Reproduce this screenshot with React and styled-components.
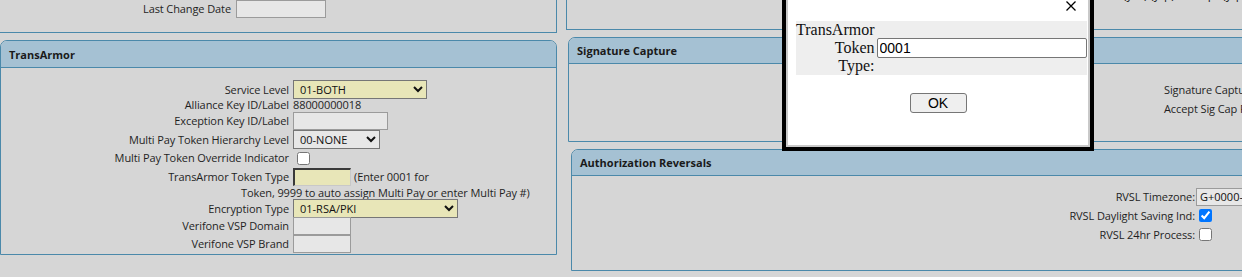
import React from 'react';
import styled, { createGlobalStyle } from 'styled-components';

const Global = createGlobalStyle`
  html, body { margin: 0; padding: 0; }
  body {
    background: #d6d6d6;
    font-family: "Open Sans", "Liberation Sans", sans-serif;
    font-size: 11px;
    letter-spacing: -0.1px;
    color: #1f1f1f;
    overflow: hidden;
  }
  * { box-sizing: border-box; }
`;

const BORDER = '#4b89aa';
const HEADER = '#a5c1d3';

const Page = styled.div`
  position: relative;
  display: flex;
  width: 1242px;
  height: 277px;
  overflow: hidden;
`;

const Column = styled.div`
  flex: none;
  width: ${(p) => p.$width}px;
  margin-left: ${(p) => p.$gap || 0}px;
  display: flex;
  flex-direction: column;
`;

const Panel = styled.section`
  border: 1px solid ${BORDER};
  border-top: ${(p) => (p.$cut ? 'none' : `1px solid ${BORDER}`)};
  border-left: ${(p) => (p.$noLeft ? 'none' : `1px solid ${BORDER}`)};
  border-radius: ${(p) => (p.$cut ? '0' : '7px 7px 0 0')};
  margin-top: ${(p) => p.$top || 0}px;
  margin-left: ${(p) => p.$shift || 0}px;
  height: ${(p) => p.$height}px;
  overflow: hidden;
  flex: none;
`;

const PanelHeader = styled.header`
  height: ${(p) => p.$h || 27}px;
  background: ${HEADER};
  border-bottom: 1px solid ${BORDER};
  display: flex;
  align-items: center;
  padding-left: 8px;
  font-weight: 700;
  font-size: 11px;
  letter-spacing: 0;
  color: #1a1a1a;
`;

const Body = styled.div`
  padding-top: ${(p) => p.$pt || 0}px;
  padding-left: ${(p) => p.$pl || 0}px;
  display: flex;
  flex-direction: column;
`;

const Row = styled.div`
  display: grid;
  grid-template-columns: ${(p) => p.$label}px auto;
  column-gap: ${(p) => (p.$gap === undefined ? 4 : p.$gap)}px;
  align-items: center;
  height: ${(p) => p.$h}px;
  white-space: nowrap;
`;

const Label = styled.label`
  text-align: right;
  line-height: 12px;
`;

const Controls = styled.div`
  display: flex;
  align-items: center;
  gap: 3px;
`;

const TextBox = styled.input`
  width: ${(p) => p.$w}px;
  height: 18px;
  margin: 0;
  padding: 0 3px;
  font-family: "Open Sans", sans-serif;
  font-size: 11px;
  background: ${(p) => (p.$yellow ? '#e8e6b8' : '#e7e7e7')};
  border: 1px solid #9b9b9b;
  ${(p) =>
    p.$yellow &&
    `border-top: 2px solid #3a3a3a; border-left: 2px solid #3a3a3a; border-right: 1px solid #c8c8c8; border-bottom: 1px solid #c8c8c8;`}
  outline: none;
  color: #111;
`;

const Select = styled.select`
  width: ${(p) => p.$w}px;
  height: 19px;
  margin: 0;
  padding: 0 0 0 2px;
  font-family: "Open Sans", sans-serif;
  font-size: 11px;
  color: #111;
  background-color: ${(p) => (p.$yellow ? '#e8e6b8' : '#e7e7e7')};
  border: 1px solid #767676;
  border-radius: 0;
`;

const Check = styled.input.attrs({ type: 'checkbox' })`
  width: 13px;
  height: 13px;
  margin: 0 0 0 4px;
  accent-color: #0075ff;
`;

const Value = styled.span`
  line-height: 12px;
`;

const Note = styled.div`
  height: ${(p) => p.$h}px;
  padding-left: ${(p) => p.$pl}px;
  display: flex;
  align-items: center;
  white-space: nowrap;
`;

const PlainRow = styled.div`
  height: ${(p) => p.$h}px;
  display: flex;
  align-items: center;
  white-space: nowrap;
`;

/* ---------- dialog ---------- */
const Dialog = styled.div`
  position: absolute;
  left: 782px;
  top: -20px;
  width: 312px;
  height: 171px;
  border: 4px solid #000;
  background: #fff;
`;

const DialogInner = styled.div`
  height: 100%;
  border: 2px solid #c9c9c9;
  border-top: none;
  display: flex;
  flex-direction: column;
`;

const TitleBar = styled.div`
  height: 37px;
  flex: none;
  position: relative;
`;

const Close = styled.button`
  position: absolute;
  right: 12px;
  top: 17px;
  width: 10px;
  height: 10px;
  padding: 0;
  border: none;
  background: none;
  display: flex;
`;

const FieldTable = styled.table`
  margin-left: 8px;
  width: 291px;
  background: #eeeeee;
  border-collapse: collapse;
  font-family: "Liberation Serif", "Times New Roman", serif;
  font-size: 16px;
  letter-spacing: 0;
  color: #111;
`;

const LabelCell = styled.td`
  width: 78px;
  text-align: right;
  line-height: 18px;
  padding: 0;
  vertical-align: middle;
`;

const InputCell = styled.td`
  padding: 0 0 0 2px;
  vertical-align: middle;
`;

const DialogInput = styled.input`
  width: 210px;
  height: 20px;
  margin: 0;
  padding: 0 2px;
  border: 1px solid #767676;
  border-radius: 2px;
  font-family: "Liberation Sans", Arial, sans-serif;
  font-size: 14px;
  color: #000;
  display: block;
`;

const ButtonRow = styled.div`
  display: flex;
  justify-content: center;
  margin-top: 18px;
`;

const OkButton = styled.button`
  width: 57px;
  height: 20px;
  padding: 0;
  background: #efefef;
  border: 1px solid #767676;
  border-radius: 3px;
  font-family: "Liberation Sans", Arial, sans-serif;
  font-size: 14px;
  color: #000;
`;

const Peek = styled.div`
  margin-top: -12px;
  height: 14px;
  padding-left: 556px;
  white-space: nowrap;
  font-size: 12px;
  line-height: 14px;
`;

export default function App() {
  return (
    <>
      <Global />
      <Page>
        <Column $width={557}>
          <Panel $cut $noLeft $height={33}>
            <Row $label={231} $gap={5} $h={18}>
              <Label>Last Change Date</Label>
              <TextBox $w={90} readOnly value="" />
            </Row>
          </Panel>

          <Panel $top={7} $height={215}>
            <PanelHeader>TransArmor</PanelHeader>
            <Body $pt={12}>
              <Row $label={288} $h={19}>
                <Label>Service Level</Label>
                <Select $w={134} $yellow defaultValue="01">
                  <option value="01">01-BOTH</option>
                </Select>
              </Row>
              <Row $label={288} $h={12}>
                <Label>Alliance Key ID/Label</Label>
                <Value>88000000018</Value>
              </Row>
              <Row $label={288} $h={19}>
                <Label>Exception Key ID/Label</Label>
                <TextBox $w={95} readOnly value="" />
              </Row>
              <Row $label={288} $h={19}>
                <Label>Multi Pay Token Hierarchy Level</Label>
                <Select $w={87} defaultValue="00">
                  <option value="00">00-NONE</option>
                </Select>
              </Row>
              <Row $label={288} $h={18}>
                <Label>Multi Pay Token Override Indicator</Label>
                <Check readOnly />
              </Row>
              <Row $label={288} $h={19}>
                <Label>TransArmor Token Type</Label>
                <Controls>
                  <TextBox $w={58} $yellow readOnly value="" />
                  <span>(Enter 0001 for</span>
                </Controls>
              </Row>
              <Note $h={13} $pl={240}>
                Token, 9999 to auto assign Multi Pay or enter Multi Pay #)
              </Note>
              <Row $label={288} $h={18}>
                <Label>Encryption Type</Label>
                <Select $w={165} $yellow defaultValue="01">
                  <option value="01">01-RSA/PKI</option>
                </Select>
              </Row>
              <Row $label={288} $h={18}>
                <Label>Verifone VSP Domain</Label>
                <TextBox $w={58} readOnly value="" />
              </Row>
              <Row $label={288} $h={18}>
                <Label>Verifone VSP Brand</Label>
                <TextBox $w={58} readOnly value="" />
              </Row>
            </Body>
          </Panel>
        </Column>

        <Column $width={720} $gap={9}>
          <Panel $cut $height={30}>
            <Peek>(y/n) (y/p) Prompt (y/p)</Peek>
          </Panel>

          <Panel $top={7} $shift={2} $height={105}>
            <PanelHeader $h={26}>Signature Capture</PanelHeader>
            <Body $pt={16} $pl={595}>
              <PlainRow $h={19}>Signature Capture Ind:</PlainRow>
              <PlainRow $h={19}>Accept Sig Cap Prompt:</PlainRow>
            </Body>
          </Panel>

          <Panel $top={7} $shift={5} $height={122}>
            <PanelHeader $h={26}>Authorization Reversals</PanelHeader>
            <Body $pt={11}>
              <Row $label={623} $gap={1} $h={19}>
                <Label>RVSL Timezone:</Label>
                <TextBox $w={120} readOnly value="G+0000-GMT" />
              </Row>
              <Row $label={623} $gap={0} $h={19}>
                <Label>RVSL Daylight Saving Ind:</Label>
                <Check defaultChecked />
              </Row>
              <Row $label={623} $gap={0} $h={19}>
                <Label>RVSL 24hr Process:</Label>
                <Check />
              </Row>
            </Body>
          </Panel>
        </Column>

        <Dialog role="dialog">
          <DialogInner>
            <TitleBar>
              <Close aria-label="Close">
                <svg width="10" height="10" viewBox="0 0 10 10">
                  <path d="M0.5 0.5 L9.5 9.5 M9.5 0.5 L0.5 9.5" stroke="#000" strokeWidth="1.3" />
                </svg>
              </Close>
            </TitleBar>
            <FieldTable>
              <tbody>
                <tr>
                  <LabelCell>TransArmor Token Type:</LabelCell>
                  <InputCell>
                    <DialogInput defaultValue="0001" />
                  </InputCell>
                </tr>
              </tbody>
            </FieldTable>
            <ButtonRow>
              <OkButton>OK</OkButton>
            </ButtonRow>
          </DialogInner>
        </Dialog>
      </Page>
    </>
  );
}
